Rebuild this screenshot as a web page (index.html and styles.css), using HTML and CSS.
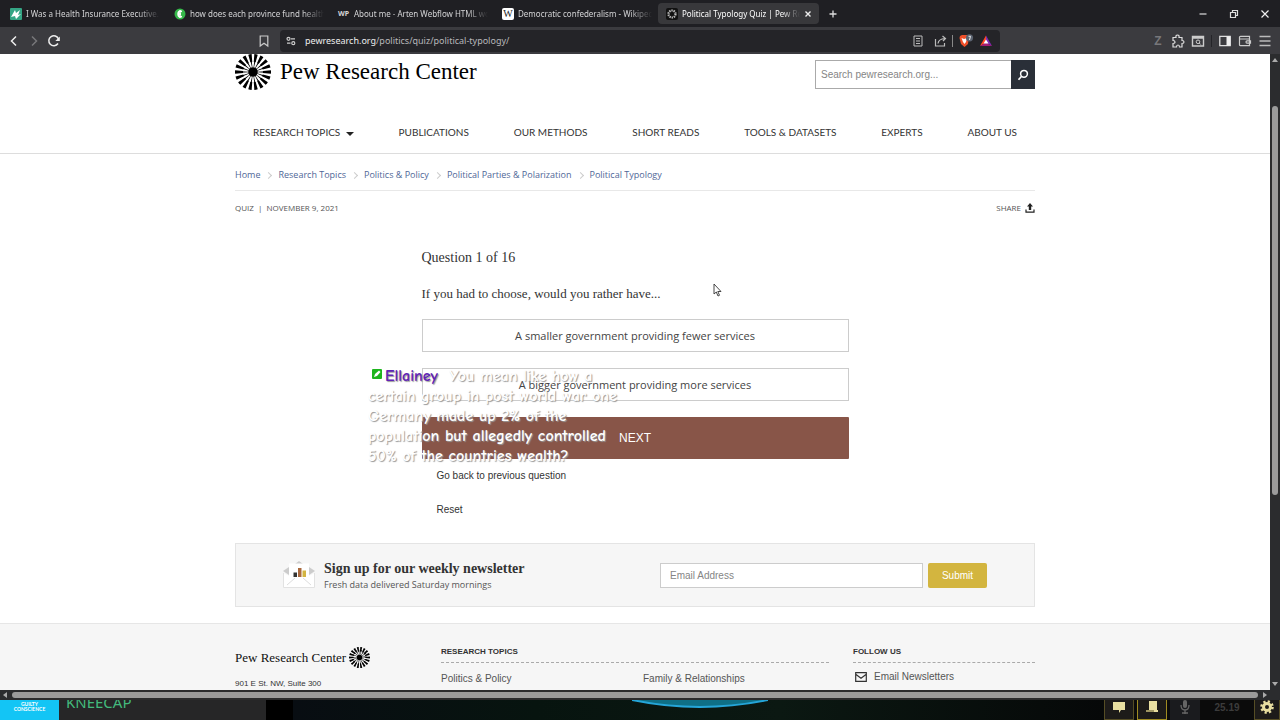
FILE: index.html
```html
<!DOCTYPE html>
<html lang="en">
<head>
    <meta charset="UTF-8">
    <meta name="viewport" content="width=device-width, initial-scale=1.0">
    <title>Political Typology Quiz | Pew Research Center</title>
    <link rel="stylesheet" href="styles.css">
</head>
<body>
    <!-- Shared shapes -->
    <svg class="defs" aria-hidden="true">
        <symbol id="wheel" viewBox="0 0 36 36">
            <circle cx="18" cy="18" r="4.8"/>
            <circle cx="18" cy="18" r="9" fill="none" stroke="#000" stroke-width="9" pathLength="360" stroke-dasharray="6 14" stroke-dashoffset="3"/>
            <circle cx="18" cy="18" r="14" fill="none" stroke="#000" stroke-width="8" pathLength="360" stroke-dasharray="11 9" stroke-dashoffset="5.500"/>
        </symbol>
    </svg>

    <div class="tabs">
        <a href="#" class="tab">
            <svg class="favicon" viewBox="0 0 12 12"><rect width="12" height="12" rx="1" fill="#35a585"/><path d="M1 9l4-7 1 3 4-3-2 5 3-1-5 5-1-3z" fill="#fff"/></svg>
            <span class="tab-title">I Was a Health Insurance Executive. W</span>
        </a>
        <a href="#" class="tab">
            <svg class="favicon" viewBox="0 0 12 12"><circle cx="6" cy="6" r="5.5" fill="#35b84a"/><path d="M8 3.500Q4 2 4 6T8 8.500M4 6h3M6 2v8" fill="none" stroke="#fff" stroke-width="1.500"/></svg>
            <span class="tab-title">how does each province fund healthc</span>
        </a>
        <a href="#" class="tab">
            <span class="favicon favicon-wp">WP</span>
            <span class="tab-title">About me - Arten Webflow HTML wo</span>
        </a>
        <a href="#" class="tab">
            <span class="favicon favicon-wiki">W</span>
            <span class="tab-title">Democratic confederalism - Wikipedi</span>
        </a>
        <div class="tab active">
            <svg class="favicon" viewBox="0 0 12 12"><rect width="12" height="12" rx="2" fill="#111"/><circle cx="6" cy="6" r="3.500" fill="none" stroke="#bbb" stroke-width="2.200" stroke-dasharray="1.400 .8"/></svg>
            <span class="tab-title">Political Typology Quiz | Pew Res</span>
            <button class="icon-btn" aria-label="Close tab"><svg width="8" height="8" viewBox="0 0 8 8"><path d="M1.500 1.500l5 5m0-5l-5 5" stroke="#eee" stroke-width="1.400"/></svg></button>
        </div>
        <button class="icon-btn new-tab" aria-label="New tab"><svg width="10" height="10" viewBox="0 0 10 10"><path d="M5 1.500v7M1.500 5h7" stroke="#ddd" stroke-width="1.300"/></svg></button>
        <div class="window-controls">
            <button class="icon-btn" aria-label="Minimize"><svg width="12" height="12" viewBox="0 0 12 12"><path d="M2.500 6h7" stroke="#ddd" stroke-width="1.200"/></svg></button>
            <button class="icon-btn" aria-label="Restore"><svg width="12" height="12" viewBox="0 0 12 12"><path d="M2.500 4.500h5v5h-5zM4.500 4V2.500h5v5H8" fill="none" stroke="#ddd" stroke-width="1.200"/></svg></button>
            <button class="icon-btn" aria-label="Close"><svg width="12" height="12" viewBox="0 0 12 12"><path d="M2.500 2.500l7 7m0-7l-7 7" stroke="#eee" stroke-width="1.200"/></svg></button>
        </div>
    </div>

    <div class="toolbar">
        <div class="nav-buttons">
            <button class="icon-btn" aria-label="Back"><svg width="14" height="14" viewBox="0 0 14 14"><path d="M9 2.500L4.500 7 9 11.500" fill="none" stroke="#eee" stroke-width="1.500"/></svg></button>
            <button class="icon-btn" aria-label="Forward"><svg width="14" height="14" viewBox="0 0 14 14"><path d="M5 2.500L9.500 7 5 11.500" fill="none" stroke="#77777a" stroke-width="1.500"/></svg></button>
            <button class="icon-btn" aria-label="Reload"><svg width="14" height="14" viewBox="0 0 14 14"><path d="M11 9.500A5 5 0 1 1 11.500 5" fill="none" stroke="#eee" stroke-width="1.500"/><path d="M12.800 2.500v4.500H8.300z" fill="#eee"/></svg></button>
            <button class="icon-btn bookmark" aria-label="Bookmark"><svg width="14" height="14" viewBox="0 0 14 14"><path d="M3.200 2h7.600v10L7 9.200 3.200 12z" fill="none" stroke="#ccc" stroke-width="1.200"/></svg></button>
        </div>
        <div class="address">
            <svg width="10" height="10" viewBox="0 0 10 10"><g fill="none" stroke="#ccc" stroke-width="1.200"><circle cx="2.500" cy="2.800" r="1.500"/><path d="M5 2.800h4M1 7.200h3.500"/><circle cx="7.300" cy="7.200" r="1.500"/></g></svg>
            <div class="url"><span class="host">pewresearch.org</span>/politics/quiz/political-typology/</div>
            <div class="address-icons">
                <svg width="14" height="14" viewBox="0 0 14 14"><path d="M3 2h8v10H3zM5 4.500h4M5 7h4M5 9.500h4" fill="none" stroke="#bbb"/></svg>
                <svg class="share-page" width="14" height="14" viewBox="0 0 14 14"><path d="M1.500 5v7h9V9M4 9.500Q4.500 5 11 4.500M8.500 2L11.500 4.500 9 7" fill="none" stroke="#bbb" stroke-width="1.200"/></svg>
                <span class="divider"></span>
                <svg class="shields" width="18" height="14" viewBox="0 0 18 14"><path d="M3 2l2-1h5l2 1.500L11 10l-3.500 3L4 10 2.500 4z" fill="#f0502a"/><path d="M4.500 4L7 5l3-1-1 4-1.500 2L6 8z" fill="#fff"/><circle cx="12.500" cy="3.800" r="3.600" fill="#5b6370"/><path d="M11.500 2.300h2L12.500 6" fill="none" stroke="#eee"/></svg>
                <svg width="14" height="14" viewBox="0 0 14 14"><path d="M7 1.500L1 12l6-3.500z" fill="#ff4724"/><path d="M7 1.500L13 12 7 8.500z" fill="#7c2bb5"/><path d="M1 12h12L7 8.500z" fill="#a31b75"/><path d="M7 5.500L4.500 9.500h5z" fill="#fff"/></svg>
            </div>
        </div>
        <div class="extensions">
            <span class="zotero">Z</span>
            <button class="icon-btn" aria-label="Extensions"><svg width="14" height="14" viewBox="0 0 14 14"><path d="M2 3.500h3Q4.500 1 6.500 1T8 3.500h3v3q2 0 2 1.500t-2 1.500V13H8.500Q8.500 11 7 11t-1.500 2H2V9.500Q4 9.500 4 8T2 6.500z" fill="none" stroke="#ddd" stroke-width="1.200"/></svg></button>
            <button class="icon-btn" aria-label="Search page"><svg width="14" height="14" viewBox="0 0 14 14"><path d="M1.500 2.500h11v9.500h-11zM1.500 4h11" fill="none" stroke="#ccc" stroke-width="1.400"/><circle cx="7" cy="7.800" r="1.800" fill="none" stroke="#ccc"/><path d="M8.200 9l1.500 1.500" stroke="#ccc"/></svg></button>
            <span class="divider dark"></span>
            <button class="icon-btn" aria-label="Sidebar"><svg width="14" height="14" viewBox="0 0 14 14"><path d="M1.800 2.300h10.400v9.400H1.800z" fill="none" stroke="#ddd" stroke-width="1.300"/><path d="M8.500 2.300h4v9.400h-4z" fill="#eee"/></svg></button>
            <button class="icon-btn" aria-label="Wallet"><svg width="14" height="14" viewBox="0 0 14 14"><path d="M11.500 5V2.300h-9q-1 0-1 1v7.400q0 1 1 1h9V5H2M12.500 6.800H9q-1 0-1 1.200t1 1.200h3.500z" fill="none" stroke="#ccc" stroke-width="1.200"/></svg></button>
            <button class="icon-btn" aria-label="Menu"><svg width="14" height="14" viewBox="0 0 14 14"><path d="M1.500 2.500h11M1.500 7h11M1.500 11.500h11" stroke="#bbb" stroke-width="1.300"/></svg></button>
        </div>
    </div>

    <div class="browser-view">
        <div class="page">
            <header class="site-header">
                <div class="container header-top">
                    <a href="#" class="logo">
                        <svg width="36" height="36"><use href="#wheel"/></svg>
                        <span>Pew Research Center</span>
                    </a>
                    <form class="search">
                        <input type="text" placeholder="Search pewresearch.org..." aria-label="Search pewresearch.org">
                        <button type="button" aria-label="Search"><svg width="12" height="12" viewBox="0 0 12 12"><circle cx="7" cy="4.800" r="3.400" fill="none" stroke="#fff" stroke-width="1.500"/><path d="M4.600 7.300L1.500 10.800" stroke="#fff" stroke-width="1.700"/></svg></button>
                    </form>
                </div>
                <nav class="container main-nav">
                    <a href="#">RESEARCH TOPICS <span class="caret"></span></a>
                    <a href="#">PUBLICATIONS</a>
                    <a href="#">OUR METHODS</a>
                    <a href="#">SHORT READS</a>
                    <a href="#">TOOLS &amp; DATASETS</a>
                    <a href="#">EXPERTS</a>
                    <a href="#">ABOUT US</a>
                </nav>
            </header>

            <main class="container">
                <div class="breadcrumbs">
                    <a href="#">Home</a>
                    <a href="#">Research Topics</a>
                    <a href="#">Politics &amp; Policy</a>
                    <a href="#">Political Parties &amp; Polarization</a>
                    <a href="#">Political Typology</a>
                </div>
                <div class="meta">
                    <span>QUIZ &nbsp;|&nbsp; NOVEMBER 9, 2021</span>
                    <a href="#" class="share">SHARE
                        <svg width="10" height="10" viewBox="0 0 10 10"><path d="M5 0l3 3.500H6.200V7H3.800V3.500H2z" fill="#222"/><path d="M1 6.500v2.700h8V6.500" fill="none" stroke="#222" stroke-width="1.200"/></svg>
                    </a>
                </div>

                <section class="quiz">
                    <h2>Question 1 of 16</h2>
                    <p>If you had to choose, would you rather have...</p>
                    <button class="choice">A smaller government providing fewer services</button>
                    <button class="choice">A bigger government providing more services</button>
                    <button class="next">NEXT</button>
                    <div class="quiz-links">
                        <a href="#">Go back to previous question</a>
                        <a href="#">Reset</a>
                    </div>
                </section>

                <section class="newsletter">
                    <svg width="32" height="28" viewBox="0 0 32 28"><path d="M12 3l4-3 4 3zM0 10l6-4v8zM32 10l-6-4v8z" fill="#ccc"/><path d="M.5 12L6 15V2.500h20V15l5.500-3v14.500H.5z" fill="#fff"/><path d="M.5 12v14.500h31V12" fill="none" stroke="#e2e2e2"/><path d="M4 24l8-7m16 7l-8-7" stroke="#ddd"/><path d="M10.500 11.500H14V16h-3.500z" fill="#333"/><path d="M15 7h3.500v9H15z" fill="#a9683c"/><path d="M19.500 9.500H23V16h-3.500z" fill="#d3b441"/></svg>
                    <div class="newsletter-text">
                        <h3>Sign up for our weekly newsletter</h3>
                        <p>Fresh data delivered Saturday mornings</p>
                    </div>
                    <form class="signup">
                        <input type="email" placeholder="Email Address" aria-label="Email Address">
                        <button type="button">Submit</button>
                    </form>
                </section>
            </main>

            <footer class="site-footer">
                <div class="container footer-grid">
                    <div>
                        <a href="#" class="footer-logo">Pew Research Center <svg width="21" height="21"><use href="#wheel"/></svg></a>
                        <p class="street">901 E St. NW, Suite 300</p>
                    </div>
                    <div>
                        <h4>RESEARCH TOPICS</h4>
                        <div class="topics">
                            <a href="#">Politics &amp; Policy</a>
                            <a href="#">Family &amp; Relationships</a>
                        </div>
                    </div>
                    <div>
                        <h4>FOLLOW US</h4>
                        <a href="#" class="follow"><svg width="12" height="10" viewBox="0 0 12 10"><path d="M.7.700h10.600v8.600H.7zM1 2.500l5 3.800 5-3.800" fill="none" stroke="#333" stroke-width="1.200"/></svg> Email Newsletters</a>
                    </div>
                </div>
            </footer>
        </div>
        <div class="scroll-y">
            <span class="arrow up"></span>
            <span class="thumb-y"></span>
            <span class="arrow down"></span>
        </div>
    </div>
    <div class="scroll-x">
        <span class="arrow left"></span>
        <span class="thumb-x"></span>
        <span class="arrow right"></span>
    </div>

    <!-- Stream strip behind the browser window -->
    <div class="stream-bar">
        <div class="album"><span>GUILTY</span><span>CONSCIENCE</span></div>
        <div class="artist">KNEECAP</div>
        <div class="game">
            <svg class="orb" width="136" height="8" viewBox="0 0 136 8"><path d="M0 0Q68 14 136 0z" fill="#0f6f86"/><path d="M0 0Q68 14 136 0" fill="none" stroke="#25a5d8" stroke-width="2"/></svg>
        </div>
        <div class="hud">
            <div class="slot"><svg width="14" height="14" viewBox="0 0 14 14"><path d="M1 2h12v8H9l-2 3v-3H1z" fill="#e9dfa0"/></svg></div>
            <div class="slot lit"><svg width="14" height="14" viewBox="0 0 14 14"><path d="M4 1h8v9h1v2H1v-2h3z" fill="#e9dfa0"/><path d="M1 11h8" stroke="#554d25"/></svg></div>
            <div class="slot mic"><svg width="14" height="14" viewBox="0 0 14 14"><rect x="5" y="0" width="4" height="8" rx="2" fill="#666"/><path d="M3 5q0 5 4 5t4-5M7 10v4M4 13h6" fill="none" stroke="#666" stroke-width="1.300"/></svg></div>
            <div class="clock">25.19</div>
            <div class="slot"><svg width="14" height="14" viewBox="0 0 14 14"><circle cx="7" cy="7" r="3.500" fill="none" stroke="#e9dfa0" stroke-width="3"/><circle cx="7" cy="7" r="5.600" fill="none" stroke="#e9dfa0" stroke-width="2.400" stroke-dasharray="2.200 2.200"/></svg></div>
        </div>
    </div>

    <div class="chat">
        <svg width="10" height="10" viewBox="0 0 10 10"><rect width="10" height="10" rx="1" fill="#1db51d"/><path d="M2 8l1-3 4-3.500L8.500 3 5 7z" fill="#fff"/></svg><span class="chat-user">Ellainey</span>&nbsp; You mean like how a<br>certain group in post world war one<br>Germany made up 2% of the<br>population but allegedly controlled<br>50% of the countries wealth?
    </div>
    <svg class="cursor" width="9" height="14" viewBox="0 0 9 14"><path d="M1 1v10l2.300-2 1.700 4 1.500-.7L4.800 8.500H8z" fill="#fff" stroke="#333" stroke-width=".9"/></svg>
</body>
</html>
```

FILE: styles.css
```css
* {
    box-sizing: border-box;
}

body {
    margin: 0;
    height: 100vh;
    display: flex;
    flex-direction: column;
    position: relative;
    overflow: hidden;
    font-family: "Liberation Sans", Arial, sans-serif;
    font-size: 11px;
    line-height: 16px;
    color: #333;
    background: #fff;
}

h2, h3, h4, p {
    margin: 0;
}

a {
    color: inherit;
    text-decoration: none;
}

button, input {
    font-family: inherit;
}

svg {
    display: block;
    flex: none;
}

.defs {
    position: absolute;
    width: 0;
    height: 0;
}

.icon-btn {
    display: flex;
    padding: 0;
    border: none;
    background: none;
}

/* Browser tabs */
.tabs {
    flex: none;
    display: flex;
    align-items: center;
    gap: 3px;
    height: 27px;
    padding-left: 2px;
    background: #1f1f23;
    font-family: "Noto Sans", sans-serif;
    font-size: 8px;
    color: #d4d4d6;
}

.tab {
    display: flex;
    align-items: center;
    gap: 4px;
    width: 161px;
    height: 21px;
    padding: 0 3px 0 8px;
    border-radius: 4px;
}

.tab.active {
    padding-right: 7px;
    background: #38383b;
    color: #fff;
}

.favicon {
    width: 12px;
    height: 12px;
    flex: none;
}

.favicon-wp {
    font-size: 7px;
    line-height: 12px;
    font-weight: bold;
}

.favicon-wiki {
    border-radius: 2px;
    background: #fff;
    color: #222;
    font-family: "Liberation Serif", serif;
    font-size: 10px;
    line-height: 12px;
    text-align: center;
}

.tab-title {
    flex: 1;
    overflow: hidden;
    white-space: nowrap;
    mask-image: linear-gradient(to right, #000 84%, transparent);
}

.new-tab {
    margin-left: 6px;
}

.window-controls {
    display: flex;
    gap: 19px;
    margin-left: auto;
    padding-right: 9px;
}

/* Browser toolbar */
.toolbar {
    flex: none;
    display: grid;
    grid-template-columns: 280px 1fr 280px;
    align-items: center;
    height: 27px;
    background: #3b3b3f;
}

.nav-buttons {
    display: flex;
    gap: 6px;
    padding: 0 9px 0 7px;
}

.bookmark {
    margin-left: auto;
}

.address {
    display: flex;
    align-items: center;
    gap: 9px;
    height: 22px;
    padding: 0 7px 0 6px;
    border-radius: 4px;
    background: #242428;
    font-family: "Noto Sans", sans-serif;
    font-size: 9px;
    color: #b8b8bb;
}

.host {
    color: #eee;
}

.address-icons {
    display: flex;
    align-items: center;
    gap: 4px;
    margin-left: auto;
}

.share-page {
    margin-left: 5px;
}

.divider {
    width: 1px;
    height: 12px;
    background: #888;
}

.divider.dark {
    background: #242428;
}

.extensions {
    display: flex;
    align-items: center;
    justify-content: flex-end;
    gap: 6px;
    padding-right: 8px;
}

.zotero {
    width: 14px;
    color: #77777a;
    font-size: 12px;
    font-weight: bold;
    text-align: center;
}

/* Page */
.browser-view {
    flex: 1;
    min-height: 0;
    display: flex;
}

.page {
    flex: 1;
    display: flex;
    flex-direction: column;
    overflow: hidden;
}

.container {
    width: 100%;
    max-width: 800px;
    margin: 0 auto;
}

.site-header {
    border-bottom: 1px solid #ddd;
}

.header-top {
    display: flex;
    justify-content: space-between;
    align-items: flex-start;
}

.logo {
    display: flex;
    align-items: center;
    gap: 9px;
    font-family: "Liberation Serif", serif;
    font-size: 23px;
    color: #000;
}

.search {
    display: flex;
    width: 220px;
    height: 29px;
    margin-top: 6px;
}

.search input {
    flex: 1;
    min-width: 0;
    padding: 0 5px;
    border: 1px solid #aaa;
    border-right: none;
    font-size: 10px;
}

.search button {
    display: flex;
    align-items: center;
    justify-content: center;
    width: 24px;
    padding: 0;
    border: none;
    background: #2a2f38;
}

input::placeholder {
    color: #858585;
}

.main-nav {
    display: flex;
    justify-content: space-between;
    padding: 34px 18px 13px;
    font-family: Lato, sans-serif;
    font-size: 10px;
    color: #333;
}

.caret {
    display: inline-block;
    margin-left: 3px;
    border: 4px solid transparent;
    border-top-color: #222;
    border-bottom: none;
}

.breadcrumbs {
    display: flex;
    gap: 18px;
    padding: 13px 0 7px;
    border-bottom: 1px solid #e8e8e8;
    font-family: "Open Sans", sans-serif;
    font-size: 9px;
    color: #4f6797;
}

.breadcrumbs a {
    position: relative;
}

.breadcrumbs a + a::before {
    content: "";
    position: absolute;
    left: -12px;
    top: 6px;
    width: 4px;
    height: 4px;
    border-top: 1px solid #ccc;
    border-right: 1px solid #ccc;
    transform: rotate(45deg);
}

.meta {
    display: flex;
    justify-content: space-between;
    padding-top: 9px;
    font-family: "Open Sans", sans-serif;
    font-size: 8px;
    color: #555;
}

.share {
    display: flex;
    align-items: center;
    gap: 4px;
}

.quiz {
    display: flex;
    flex-direction: column;
    gap: 16px;
    width: 427px;
    margin: 32px auto 25px;
}

.quiz h2,
.quiz p {
    font-family: "Liberation Serif", serif;
    font-size: 14px;
    font-weight: normal;
    line-height: 20px;
}

.quiz p {
    font-size: 13px;
    line-height: 19px;
}

.choice {
    height: 33px;
    border: 1px solid #ccc;
    background: transparent;
    font-family: "Open Sans", sans-serif;
    font-size: 11px;
    color: #444;
}

.next {
    height: 42px;
    border: none;
    border-radius: 1px;
    background: #885548;
    color: #fff;
    font-size: 12px;
}

.quiz-links {
    display: flex;
    flex-direction: column;
    align-items: flex-start;
    gap: 18px;
    margin-top: -7px;
    padding-left: 15px;
    font-size: 10px;
}

.newsletter {
    display: flex;
    align-items: center;
    gap: 9px;
    height: 64px;
    padding: 0 47px;
    border: 1px solid #e4e4e4;
    background: #f6f6f6;
}

.newsletter-text {
    padding-top: 4px;
}

.newsletter h3 {
    font-family: "Liberation Serif", serif;
    font-size: 14px;
}

.newsletter p {
    font-family: "Open Sans", sans-serif;
    font-size: 9px;
    color: #555;
}

.signup {
    display: flex;
    gap: 5px;
    margin-left: auto;
}

.signup input {
    width: 263px;
    height: 25px;
    padding: 0 9px;
    border: 1px solid #ccc;
    font-size: 10px;
}

.signup button {
    width: 59px;
    height: 25px;
    border: none;
    border-radius: 2px;
    background: #d3b53f;
    color: #fff;
    font-size: 10px;
}

/* Footer */
.site-footer {
    flex: 1;
    margin-top: 16px;
    padding-top: 20px;
    border-top: 1px solid #e6e6e6;
    background: #f6f6f6;
}

.footer-grid {
    display: grid;
    grid-template-columns: 182px 388px 182px;
    gap: 24px;
}

.footer-logo {
    display: flex;
    align-items: center;
    gap: 3px;
    margin-top: 3px;
    font-family: "Liberation Serif", serif;
    font-size: 13px;
    color: #111;
}

.street {
    margin-top: 8px;
    font-size: 8px;
}

.footer-grid h4 {
    padding-bottom: 2px;
    border-bottom: 1px dashed #aaa;
    font-size: 8px;
}

.topics {
    display: grid;
    grid-template-columns: 202px 1fr;
    padding-top: 8px;
    font-size: 10px;
    color: #555;
}

.follow {
    display: flex;
    align-items: center;
    gap: 7px;
    padding: 6px 2px;
    font-size: 10px;
    color: #555;
}

/* Scrollbars */
.scroll-y {
    display: flex;
    flex-direction: column;
    align-items: center;
    width: 10px;
    padding: 4px 0;
    background: #2b2c2e;
}

.thumb-y {
    width: 6px;
    height: 62%;
    margin-top: 44px;
    border-radius: 3px;
    background: #9b9b9b;
}

.arrow {
    flex: none;
    border: 3px solid transparent;
}

.arrow.up {
    border-top: none;
    border-bottom: 4px solid #aaa;
}

.arrow.down {
    margin-top: auto;
    border-bottom: none;
    border-top: 4px solid #aaa;
}

.arrow.left {
    border-left: none;
    border-right: 4px solid #aaa;
}

.arrow.right {
    border-right: none;
    border-left: 4px solid #aaa;
}

.scroll-x {
    flex: none;
    display: flex;
    align-items: center;
    gap: 5px;
    height: 10px;
    padding: 0 13px 0 3px;
    background: #2b2c2e;
}

.thumb-x {
    flex: 1;
    height: 6px;
    border-radius: 3px;
    background: #9b9b9b;
}

/* Stream strip */
.stream-bar {
    flex: none;
    display: flex;
    height: 20px;
    overflow: hidden;
    background: #000;
}

.album {
    width: 59px;
    display: flex;
    flex-direction: column;
    align-items: center;
    padding-top: 2px;
    background: #13c5f5;
    color: #fff;
    font-family: Lato, sans-serif;
    font-size: 5px;
    font-weight: bold;
    line-height: 5px;
}

.artist {
    width: 207px;
    padding-left: 7px;
    background: #262627;
    color: #43b97c;
    font-family: "Noto Sans", sans-serif;
    font-size: 15px;
    line-height: 5px;
}

.game {
    flex: 1;
    margin-left: 27px;
    background: linear-gradient(to right, #080d12, #07140f 30%, #0b1812 60%, #060808);
}

.orb {
    margin-left: 339px;
}

.hud {
    display: flex;
    gap: 3px;
    background: #0b0b0b;
}

.slot {
    display: flex;
    justify-content: center;
    width: 30px;
    border: 1px solid #554d25;
    border-top: none;
    background: #1d1b19;
}

.slot.lit {
    border-color: #a08c22;
}

.slot.mic {
    border: none;
    background: #1a1b1e;
}

.slot:last-child {
    width: 26px;
}

.clock {
    width: 48px;
    color: #3c3c3c;
    font-size: 10px;
    font-weight: bold;
    text-align: center;
}

/* Overlays */
.chat {
    position: absolute;
    left: 368px;
    top: 366px;
    font-family: "Comic Sans MS", "Comic Neue", "Open Sans", sans-serif;
    font-size: 16px;
    font-weight: bold;
    line-height: 20px;
    white-space: nowrap;
    color: #fff;
    text-shadow: 1px 1px 1px #999;
}

.chat svg {
    display: inline-block;
    margin: 0 3px 2px 4px;
}

.chat-user {
    color: #5f23b5;
}

.cursor {
    position: absolute;
    left: 713px;
    top: 283px;
}
```
